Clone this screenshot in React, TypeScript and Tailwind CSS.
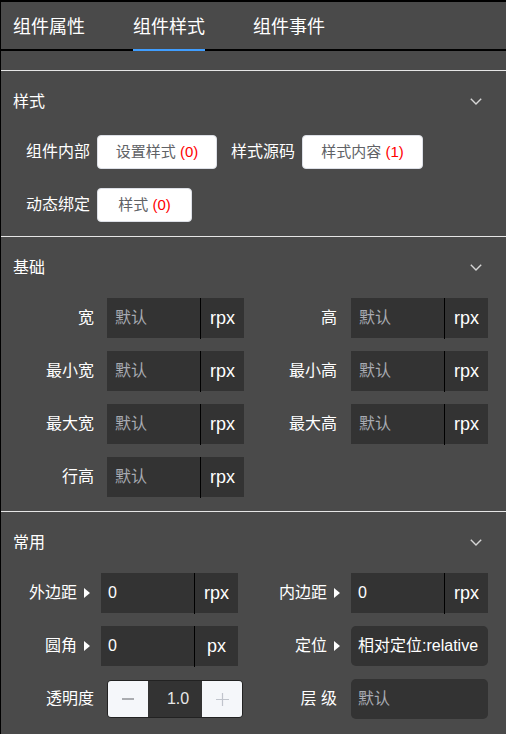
import type { ReactNode } from "react";

const FONT = "font-['Liberation_Sans','Noto_Sans_CJK_SC',sans-serif]";

const Chevron = () => (
  <svg width="12" height="7" viewBox="0 0 12 7" fill="none">
    <polyline points="0.8,0.8 6,6 11.2,0.8" stroke="#d6d6d6" strokeWidth="1.4" />
  </svg>
);

const Arrow = () => (
  <svg width="6" height="10" viewBox="0 0 6 10">
    <polygon points="0,0 6,5 0,10" fill="#ffffff" />
  </svg>
);

const SectionHeader = ({ title }: { title: string }) => (
  <div className="h-[61px] flex items-center justify-between pl-[12px] pr-[24px]">
    <span className="text-[16px] text-white">{title}</span>
    <Chevron />
  </div>
);

const StyleButton = ({ label, count, width }: { label: string; count: number; width: string }) => (
  <div
    className={`${width} h-[34px] flex items-center justify-center bg-white border border-[#dcdfe6] rounded-[4px] text-[15px] text-[#606266]`}
  >
    {label}&nbsp;<span className="text-[#ff0000]">({count})</span>
  </div>
);

type CellProps = {
  label: string;
  labelW: string;
  gap: string;
  arrow?: boolean;
  children: ReactNode;
};

const Cell = ({ label, labelW, gap, arrow, children }: CellProps) => (
  <div className="flex items-center h-[40px]">
    <div className={`${labelW} flex items-center justify-end gap-[7px] text-[16px] text-white whitespace-nowrap`}>
      <span>{label}</span>
      {arrow && <Arrow />}
    </div>
    <div className={gap}>{children}</div>
  </div>
);

const UnitInput = ({ value, unit }: { value?: string; unit: string }) => (
  <div className="flex h-[40px] w-[137px]">
    <div
      className={`w-[93px] h-full bg-[#333333] flex items-center ${
        value ? "pl-[7px] text-white" : "pl-[8px] text-[#a8abb2]"
      } text-[16px]`}
    >
      {value ?? "默认"}
    </div>
    <div className="w-[1px] h-[41px] bg-black" />
    <div className="w-[43px] h-full bg-[#333333] flex items-center justify-center text-[18px] text-white">
      {unit}
    </div>
  </div>
);

const RoundBox = ({ text, placeholder }: { text: string; placeholder?: boolean }) => (
  <div
    className={`w-[137px] h-[40px] rounded-[5px] bg-[#333333] flex items-center pl-[7px] text-[16px] whitespace-nowrap ${
      placeholder ? "text-[#a8abb2]" : "text-white"
    }`}
  >
    {text}
  </div>
);

const Stepper = () => (
  <div className="w-[136px] h-[38px] flex rounded-[4px] border border-[#222222] overflow-hidden">
    <div className="w-[40px] h-full bg-[#f5f7fa] flex items-center justify-center">
      <svg width="12" height="2" viewBox="0 0 12 2">
        <line x1="0" y1="1" x2="12" y2="1" stroke="#606266" strokeWidth="1.2" />
      </svg>
    </div>
    <div className="flex-1 h-full bg-[#333333] flex items-center justify-center pl-[6px] text-[16px] text-[#e8e8e8]">
      1.0
    </div>
    <div className="w-[40px] h-full bg-[#f5f7fa] flex items-center justify-center">
      <svg width="13" height="13" viewBox="0 0 13 13">
        <line x1="0" y1="6.5" x2="13" y2="6.5" stroke="#c0c4cc" strokeWidth="1.2" />
        <line x1="6.5" y1="0" x2="6.5" y2="13" stroke="#c0c4cc" strokeWidth="1.2" />
      </svg>
    </div>
  </div>
);

const tabs = ["组件属性", "组件样式", "组件事件"];

const App = () => {
  return (
    <div className={`w-[506px] h-[734px] bg-[#4a4a4a] border-t-2 border-l border-black overflow-hidden ${FONT}`}>
      <div className="h-[49px] flex pl-[12px] gap-[48px] border-b-2 border-black">
        {tabs.map((t, i) => (
          <div key={t} className="relative h-full flex items-center pt-[3px] text-[18px] text-white">
            {t}
            {i === 1 && <div className="absolute left-0 right-0 bottom-[-2px] h-[2px] bg-[#409eff]" />}
          </div>
        ))}
      </div>
      <div className="h-[19px]" />

      {/* 样式 */}
      <div className="border-t border-[#e6e6e6] pb-[11px]">
        <SectionHeader title="样式" />
        <div className="flex flex-col gap-[13px] pl-[25px]">
          <div className="h-[40px] flex items-center">
            <span className="text-[16px] text-white mr-[7px]">组件内部</span>
            <StyleButton label="设置样式" count={0} width="w-[120px]" />
            <span className="text-[16px] text-white ml-[14px] mr-[7px]">样式源码</span>
            <StyleButton label="样式内容" count={1} width="w-[121px]" />
          </div>
          <div className="h-[40px] flex items-center">
            <span className="text-[16px] text-white mr-[7px]">动态绑定</span>
            <StyleButton label="样式" count={0} width="w-[95px]" />
          </div>
        </div>
      </div>

      {/* 基础 */}
      <div className="border-t border-[#e6e6e6] pb-[14px]">
        <SectionHeader title="基础" />
        <div className="grid grid-cols-[231px_231px] gap-x-[13px] gap-y-[13px] pl-[12px]">
          <Cell label="宽" labelW="w-[81px]" gap="ml-[13px]">
            <UnitInput unit="rpx" />
          </Cell>
          <Cell label="高" labelW="w-[80px]" gap="ml-[14px]">
            <UnitInput unit="rpx" />
          </Cell>
          <Cell label="最小宽" labelW="w-[81px]" gap="ml-[13px]">
            <UnitInput unit="rpx" />
          </Cell>
          <Cell label="最小高" labelW="w-[80px]" gap="ml-[14px]">
            <UnitInput unit="rpx" />
          </Cell>
          <Cell label="最大宽" labelW="w-[81px]" gap="ml-[13px]">
            <UnitInput unit="rpx" />
          </Cell>
          <Cell label="最大高" labelW="w-[80px]" gap="ml-[14px]">
            <UnitInput unit="rpx" />
          </Cell>
          <Cell label="行高" labelW="w-[81px]" gap="ml-[13px]">
            <UnitInput unit="rpx" />
          </Cell>
        </div>
      </div>

      {/* 常用 */}
      <div className="border-t border-[#e6e6e6] pb-[11px]">
        <SectionHeader title="常用" />
        <div className="grid grid-cols-[231px_231px] gap-x-[13px] gap-y-[13px] pl-[12px]">
          <Cell label="外边距" labelW="w-[77px]" gap="ml-[11px]" arrow>
            <UnitInput value="0" unit="rpx" />
          </Cell>
          <Cell label="内边距" labelW="w-[83px]" gap="ml-[11px]" arrow>
            <UnitInput value="0" unit="rpx" />
          </Cell>
          <Cell label="圆角" labelW="w-[77px]" gap="ml-[11px]" arrow>
            <UnitInput value="0" unit="px" />
          </Cell>
          <Cell label="定位" labelW="w-[83px]" gap="ml-[11px]" arrow>
            <RoundBox text="相对定位:relative" />
          </Cell>
          <Cell label="透明度" labelW="w-[81px]" gap="ml-[13px]">
            <Stepper />
          </Cell>
          <Cell label="层 级" labelW="w-[80px]" gap="ml-[14px]">
            <RoundBox text="默认" placeholder />
          </Cell>
        </div>
      </div>
    </div>
  );
};

export default App;
